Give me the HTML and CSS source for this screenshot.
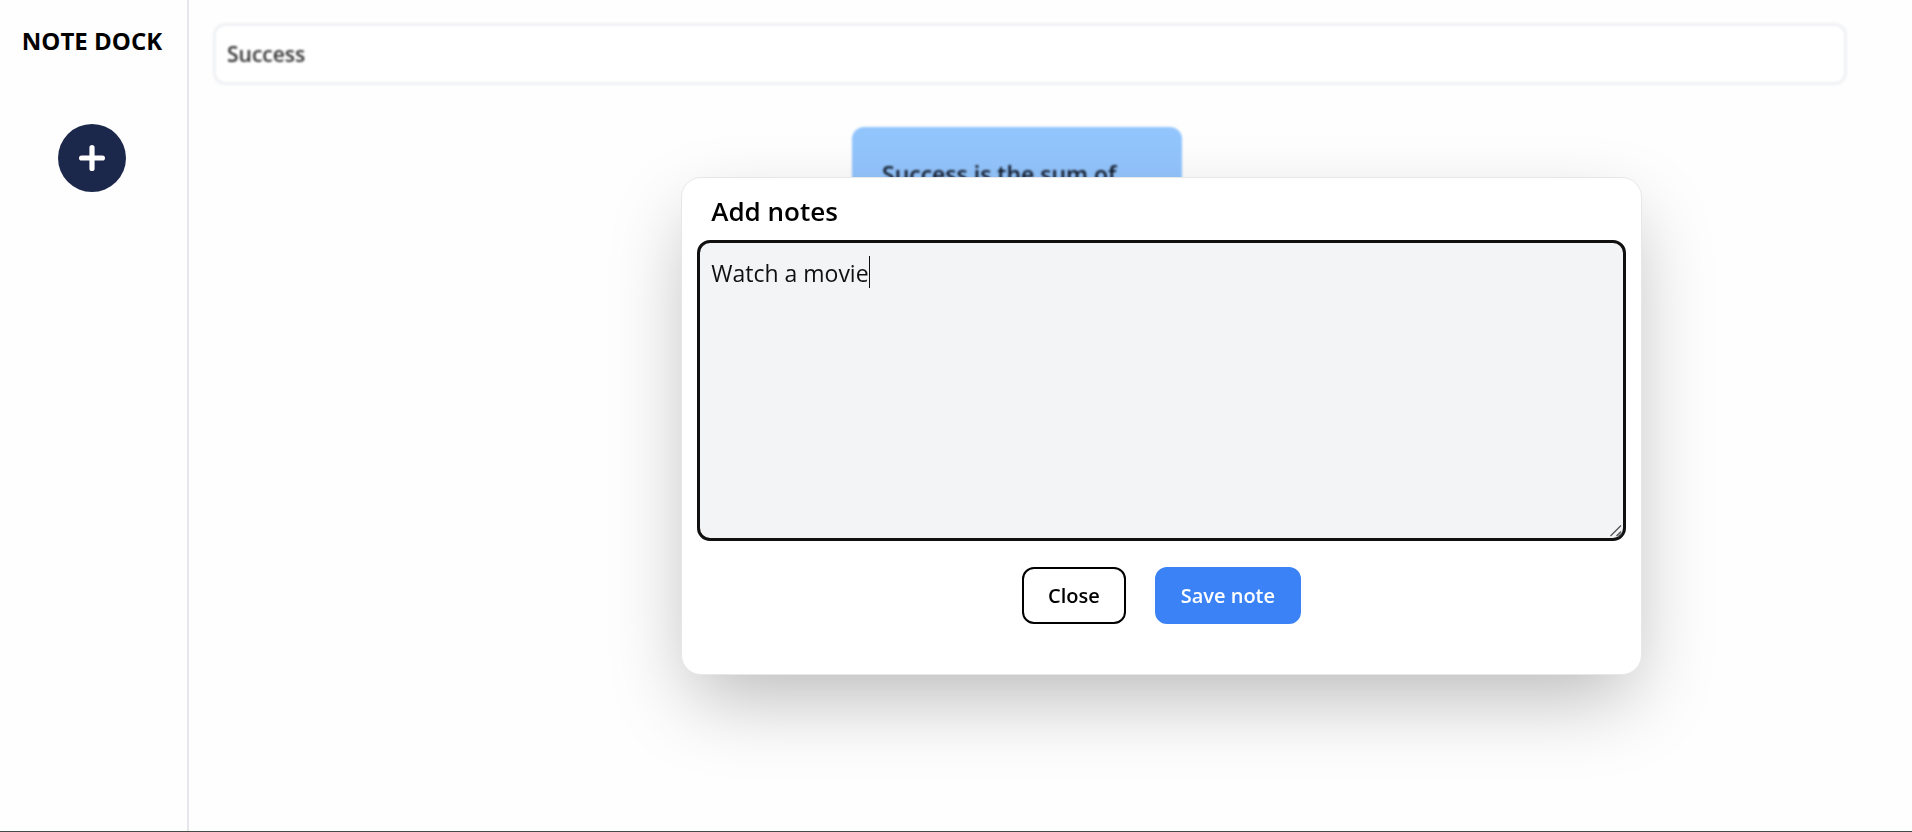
FILE: index.html
```html
<!DOCTYPE html>
<html lang="en">
<head>
<meta charset="utf-8">
<meta name="viewport" content="width=device-width, initial-scale=1">
<title>Note Dock</title>
<link rel="stylesheet" href="styles.css">
</head>
<body>
<div class="app">
  <aside class="sidebar">
    <h1 class="brand">NOTE DOCK</h1>
    <button class="add" type="button" aria-label="Add note">
      <svg class="add-icon" viewBox="0 0 26 26" aria-hidden="true"><path d="M13 2.6V23.4M2.6 13H23.4"/></svg>
    </button>
  </aside>
  <main class="content">
    <input class="search" type="text" aria-label="Search notes" value="Success">
    <section class="notes">
      <article class="note"><p class="note-text">Success is the sum of</p></article>
    </section>
  </main>
</div>
<div class="overlay">
  <form class="modal" role="dialog" aria-labelledby="note-label">
    <label class="modal-title" id="note-label" for="note">Add notes</label>
    <div class="field">
      <textarea class="editor" id="note">Watch a movie</textarea>
      <span class="caret" aria-hidden="true"></span>
      <svg class="grip" viewBox="0 0 14 14" aria-hidden="true"><path d="M1.5 12L12 1.5M7.5 12L12 7.5M9 13L13 9"/></svg>
    </div>
    <div class="actions">
      <button class="button button-close" type="button">Close</button>
      <button class="button button-save" type="button">Save note</button>
    </div>
  </form>
</div>
</body>
</html>
```
FILE: styles.css
```css
* {
  box-sizing: border-box;
}

body {
  margin: 0;
  background: #fefefe;
  color: #000;
  font-family: "Segoe UI", "Open Sans", "Noto Sans", sans-serif;
}

button,
input,
textarea {
  font: inherit;
  color: inherit;
}

.app {
  display: flex;
  min-height: 100vh;
  border-bottom: 1px solid #454b45;
}

.sidebar {
  display: flex;
  flex-direction: column;
  align-items: center;
  gap: 66px;
  width: 189px;
  flex-shrink: 0;
  padding: 24px 3px 0 0;
  border-right: 2px solid #e5e7eb;
}

.brand {
  margin: 0;
  font-size: 24px;
  font-weight: 700;
  line-height: 34px;
  white-space: nowrap;
}

.add {
  display: grid;
  place-items: center;
  width: 68px;
  height: 68px;
  padding: 0;
  border: 0;
  border-radius: 50%;
  background: #1c284b;
}

.add-icon {
  width: 26px;
  height: 26px;
  fill: none;
  stroke: #fff;
  stroke-width: 5.2;
  stroke-linecap: round;
}

.content {
  flex: 1;
  padding: 23px 65px 0 24px;
  filter: blur(1px);
}

.search {
  display: block;
  width: 100%;
  height: 62px;
  padding: 0 11px;
  border: 3px solid #f0f1f4;
  border-radius: 12px;
  background: #fff;
  color: #333;
  font-size: 21px;
  font-weight: 600;
}

.notes {
  display: flex;
  justify-content: center;
  padding: 42px 26px 0 0;
}

.note {
  width: 330px;
  min-height: 250px;
  padding: 30px;
  border-radius: 12px;
  background: #93c5fd;
}

.note-text {
  margin: 0;
  color: #111827;
  font-size: 23px;
  font-weight: 600;
  line-height: 34px;
  white-space: nowrap;
}

.overlay {
  position: fixed;
  inset: 0;
  display: flex;
  justify-content: center;
  align-items: center;
  padding: 20px 0 0 411px;
  pointer-events: none;
}

.modal {
  width: 64%;
  padding: 16px 15px 50px;
  border: 1px solid #e5e7eb;
  border-radius: 20px;
  background: #fff;
  box-shadow: 0 31px 80px -10px rgba(0, 0, 0, 0.28);
  pointer-events: auto;
}

.modal-title {
  display: block;
  padding-left: 14px;
  font-size: 26px;
  font-weight: 600;
  line-height: 34px;
}

.field {
  position: relative;
  margin-top: 12px;
}

.editor {
  display: block;
  width: 100%;
  height: 301px;
  padding: 14px 11px;
  border: 3px solid #101010;
  border-radius: 13px;
  outline: 0;
  background: #f3f4f6;
  color: #101010;
  font-size: 23px;
  line-height: 32px;
  resize: none;
}

.caret {
  position: absolute;
  top: 16px;
  left: 172px;
  width: 1px;
  height: 32px;
  background: #101010;
}

.grip {
  position: absolute;
  right: 3px;
  bottom: 3px;
  width: 14px;
  height: 14px;
  fill: none;
  stroke: #555;
  stroke-width: 1.3;
}

.actions {
  display: flex;
  justify-content: center;
  gap: 29px;
  margin-top: 26px;
}

.button {
  height: 57px;
  padding: 0 24px;
  border: 2px solid #000;
  border-radius: 12px;
  background: #fff;
  font-size: 20px;
  font-weight: 600;
}

.button-save {
  border-color: #3b82f6;
  background: #3b82f6;
  color: #fff;
}
```
